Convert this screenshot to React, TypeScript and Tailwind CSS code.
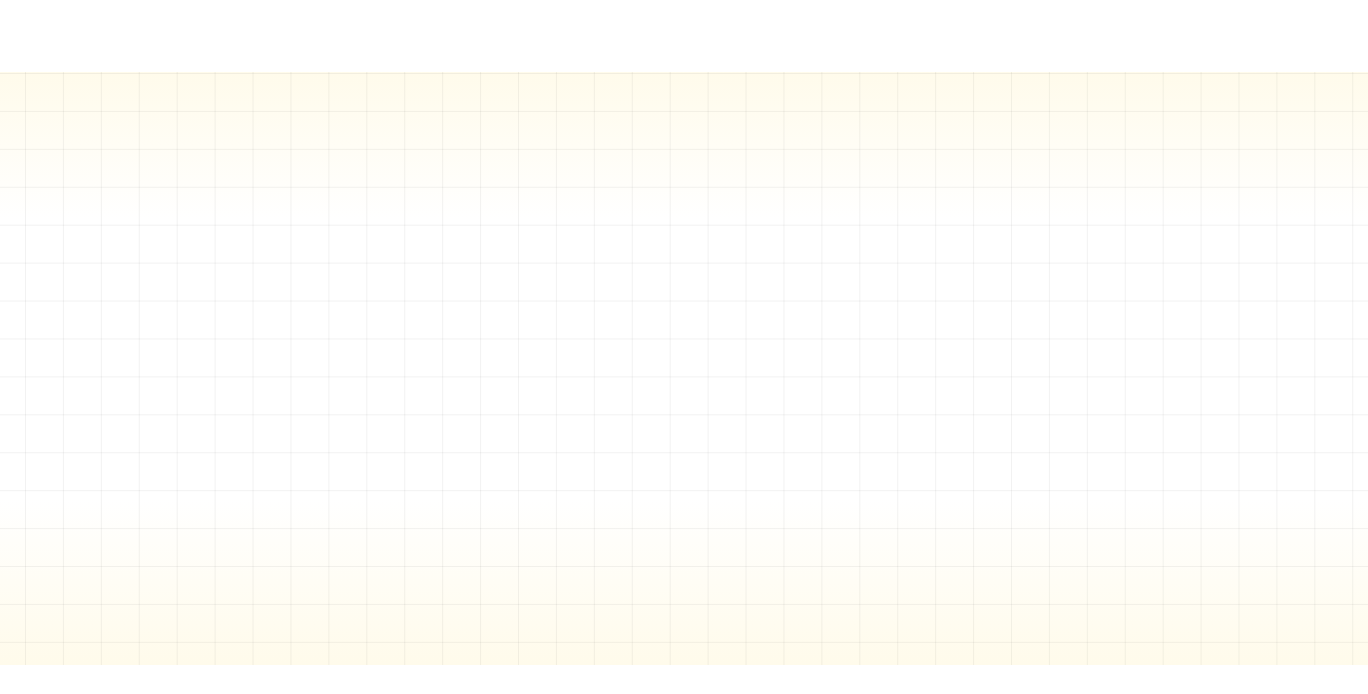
export default function App() {
  return (
    <div className="min-h-[694px] bg-white flex flex-col">
      <div className="h-[72px]" />
      <section className="relative h-[593px] bg-[linear-gradient(to_bottom,#fffbeb_0%,#ffffff_25%,#ffffff_72%,#fffbeb_100%)]">
        <div className="absolute inset-0 bg-[linear-gradient(to_right,rgba(0,0,0,0.05)_1px,transparent_1px),linear-gradient(to_bottom,rgba(0,0,0,0.05)_1px,transparent_1px)] bg-[length:37.93px_37.93px] bg-[position:25px_1px]" />
      </section>
      <div className="flex-1" />
    </div>
  );
}
